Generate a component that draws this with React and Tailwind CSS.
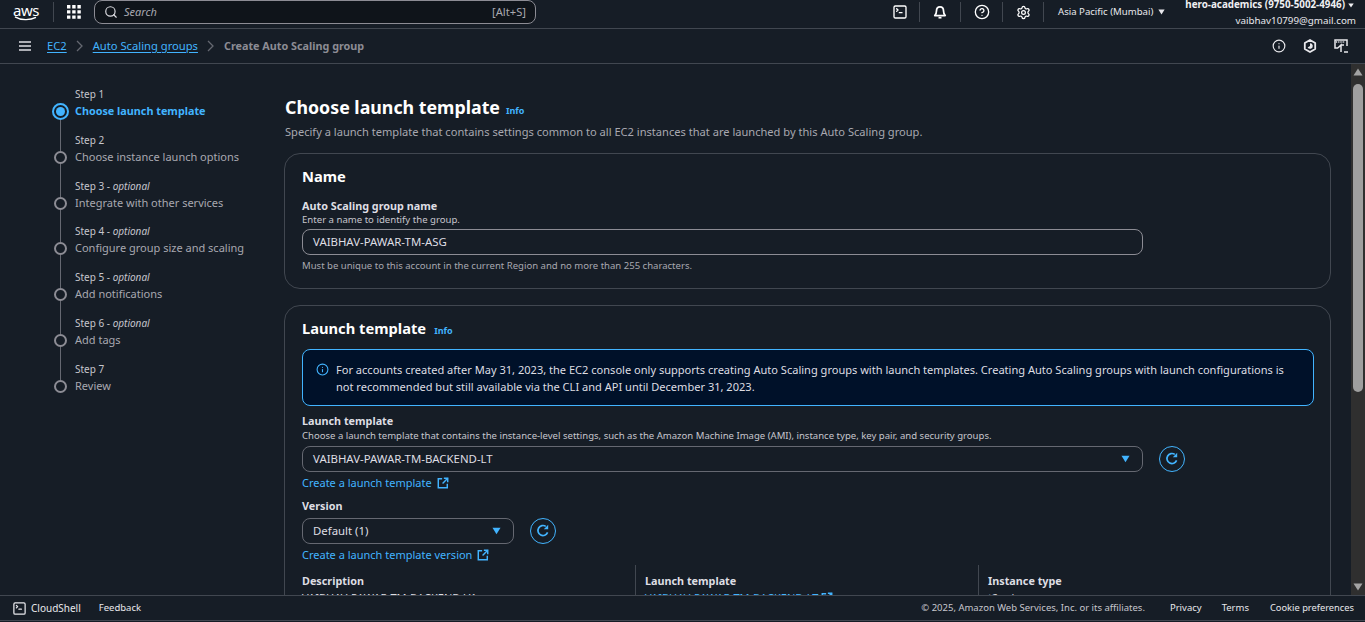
import React from "react";
import { Search, SquareTerminal, CircleHelp, Settings, Info } from "lucide-react";

const steps = [
  { label: "Step 1", title: "Choose launch template", active: true },
  { label: "Step 2", title: "Choose instance launch options" },
  { label: "Step 3", optional: true, title: "Integrate with other services" },
  { label: "Step 4", optional: true, title: "Configure group size and scaling" },
  { label: "Step 5", optional: true, title: "Add notifications" },
  { label: "Step 6", optional: true, title: "Add tags" },
  { label: "Step 7", title: "Review" },
];

function Caret({ className }) {
  return (
    <svg viewBox="0 0 10 8" className={className} fill="currentColor">
      <path d="M0.5 0.5h9L5 7.5z" />
    </svg>
  );
}

function Divider() {
  return <div className="w-px h-5 bg-[#414750] shrink-0" />;
}

function Chevron() {
  return (
    <svg viewBox="0 0 8 12" className="w-2 h-3 mx-[9px] text-[#656871]" fill="none" stroke="currentColor" strokeWidth="1.3">
      <path d="M1 1l5 5-5 5" />
    </svg>
  );
}

function ExtIcon({ className }) {
  return (
    <svg viewBox="0 0 14 14" className={className} fill="none" stroke="currentColor" strokeWidth="1.7">
      <path d="M6 2H1.5v10.5H12V8" />
      <path d="M8 1.5h4.5V6" />
      <path d="M12.5 1.5L6.5 7.5" />
    </svg>
  );
}

function Step({ step, first, last }) {
  return (
    <div className="flex gap-[7px] h-[45.83px]">
      <div className="w-4 flex flex-col items-center">
        <div className={`w-px h-[19px] ${first ? "" : "bg-[#656871]"}`} />
        {step.active ? (
          <div className="w-[17px] h-[17px] shrink-0 -mt-[2px] rounded-full border-2 border-[#42b4ff] flex items-center justify-center">
            <div className="w-[9px] h-[9px] rounded-full bg-[#42b4ff]" />
          </div>
        ) : (
          <div className="w-[13px] h-[13px] shrink-0 rounded-full border-2 border-[#8c8c94]" />
        )}
        <div className={`w-px flex-1 ${last ? "" : "bg-[#656871]"}`} />
      </div>
      <div>
        <div className="text-[10px] leading-4 text-[#c6c6cd]">
          {step.label}
          {step.optional && <span> - <i>optional</i></span>}
        </div>
        <div className={`leading-[18px] whitespace-nowrap ${step.active ? "text-[10.8px] font-bold text-[#42b4ff]" : "text-[11px] text-[#a8a8b0]"}`}>
          {step.title}
        </div>
      </div>
    </div>
  );
}

function RefreshButton() {
  return (
    <div className="w-[26px] h-[26px] rounded-full border border-[#42b4ff] text-[#42b4ff] flex items-center justify-center shrink-0">
      <svg viewBox="0 0 16 16" className="w-4 h-4" fill="none" stroke="currentColor" strokeWidth="1.7">
        <path d="M12.6 9.4A5 5 0 1 1 10.8 3.4" />
        <path d="M13.2 1.8v4.4H8.8z" fill="currentColor" stroke="none" />
      </svg>
    </div>
  );
}

function SelectBox({ value, className }) {
  return (
    <div className={`h-[26px] rounded-lg border border-[#656871] flex items-center justify-between pl-[10px] pr-[12px] text-[11.4px] text-[#dedee3] ${className}`}>
      <span>{value}</span>
      <Caret className="w-[9px] h-2 text-[#42b4ff]" />
    </div>
  );
}

function ExtLink({ children }) {
  return (
    <div className="flex items-center gap-[5px] text-[11px] leading-4 text-[#42b4ff]">
      <span>{children}</span>
      <ExtIcon className="w-3 h-3" />
    </div>
  );
}

function DetailCell({ title, value, link, border, className }) {
  return (
    <div className={`h-[60px] pt-2 shrink-0 ${border ? "border-l border-[#414750] pl-[9px]" : ""} ${className}`}>
      <div className="text-[10.8px] leading-4 font-bold text-[#dedee3]">{title}</div>
      <div className={`text-[11px] leading-4 mt-[1px] flex items-center gap-[3px] ${link ? "text-[#42b4ff] underline" : "text-[#dedee3]"}`}>
        {value}
        {link && <ExtIcon className="w-3 h-3" />}
      </div>
    </div>
  );
}

export default function App() {
  return (
    <div className="h-[622px] w-[1365px] overflow-hidden flex flex-col bg-[#161d26] text-[#dedee3] font-['Noto_Sans','Open_Sans',sans-serif]">
      {/* top nav */}
      <header className="h-[29px] shrink-0 border-b border-[#414750] flex items-center pl-[14px] pr-[9px] pb-1">
        <div className="w-6 flex flex-col items-center text-white">
          <span className="text-[15px] leading-[12px] tracking-[-0.5px]">aws</span>
          <svg viewBox="0 0 24 5" className="w-6 h-[5px]" fill="none" stroke="currentColor" strokeWidth="1.4">
            <path d="M1 0.8c6 3.6 15 3.6 21 0.6" />
          </svg>
        </div>
        <div className="w-px h-5 bg-[#414750] ml-[15px] mr-[13px]" />
        <svg viewBox="0 0 14 14" className="w-[14px] h-[14px] text-white" fill="currentColor">
          <path d="M0 0h3.4v3.4H0zM5.2 0h3.4v3.4H5.2zM10.4 0h3.4v3.4h-3.4zM0 5.2h3.4v3.4H0zM5.2 5.2h3.4v3.4H5.2zM10.4 5.2h3.4v3.4h-3.4zM0 10.4h3.4v3.4H0zM5.2 10.4h3.4v3.4H5.2zM10.4 10.4h3.4v3.4h-3.4z" />
        </svg>
        <div className="ml-[13px] w-[442px] h-[24px] rounded-lg border border-[#8c8c94] bg-[#0f141a] flex items-center pl-[9px] pr-[9px]">
          <Search size={14} strokeWidth={2} className="text-[#dedee3]" />
          <span className="ml-[6px] text-[11px] italic text-[#a8a8b0]">Search</span>
          <span className="ml-auto text-[11.2px] text-[#a8a8b0]">[Alt+S]</span>
        </div>
        <div className="ml-auto flex items-center">
          <SquareTerminal size={16} strokeWidth={2} className="text-white" />
          <div className="ml-[11px] mr-[13px]"><Divider /></div>
          <svg viewBox="0 0 16 16" className="w-[14px] h-[14px] text-white" fill="none" stroke="currentColor" strokeWidth="2">
            <path d="M2 12c1.5-1.5 2-2.5 2-5.5C4 3.5 5.5 2 8 2s4 1.5 4 4.5c0 3 .5 4 2 5.5z" strokeLinejoin="round" />
            <path d="M6.3 14.5h3.4" />
          </svg>
          <div className="mx-[13px]"><Divider /></div>
          <CircleHelp size={16} strokeWidth={2} className="text-white" />
          <div className="ml-[12px] mr-[13px]"><Divider /></div>
          <Settings size={15} strokeWidth={2} className="text-white" />
          <div className="ml-[12px]"><Divider /></div>
          <div className="ml-[14px] flex items-center gap-[5px] text-[9.6px] text-[#e8e8ec]">
            <span>Asia Pacific (Mumbai)</span>
            <Caret className="w-[7px] h-[6px]" />
          </div>
          <div className="ml-[20px] flex flex-col items-end mt-[2px]">
            <div className="flex items-center gap-[3px] mr-[2px] text-[9.8px] leading-3 font-bold text-[#f0f0f3] whitespace-nowrap">
              <span>hero-academics (9750-5002-4946)</span>
              <Caret className="w-[6px] h-[5px]" />
            </div>
            <div className="text-[9.8px] leading-3 mt-1 text-[#e8e8ec]">vaibhav10799@gmail.com</div>
          </div>
        </div>
      </header>

      {/* breadcrumbs */}
      <div className="h-[35px] shrink-0 border-b border-[#414750] flex items-center pl-[19px] pr-[17px]">
        <svg viewBox="0 0 12 10" className="w-3 h-[10px] text-[#dedee3]" stroke="currentColor" strokeWidth="1.6">
          <path d="M0 1h12M0 5h12M0 9h12" />
        </svg>
        <span className="ml-[16px] text-[11.2px] text-[#42b4ff] underline underline-offset-2">EC2</span>
        <Chevron />
        <span className="text-[11.2px] text-[#42b4ff] underline underline-offset-2">Auto Scaling groups</span>
        <Chevron />
        <span className="text-[10.8px] font-bold text-[#8c8c94]">Create Auto Scaling group</span>
        <div className="ml-auto flex items-center gap-[17px] text-[#e8e8ec]">
          <Info size={14} strokeWidth={2} />
          <svg viewBox="0 0 14 14" className="w-[14px] h-[14px]" fill="none" stroke="currentColor" strokeWidth="1.8">
            <path d="M7 1l5.2 3v6L7 13l-5.2-3V4z" strokeLinejoin="round" />
            <path d="M7 4.2a2.8 2.8 0 1 1-2.4 4.2L7 7z" fill="currentColor" stroke="none" />
          </svg>
          <svg viewBox="0 0 14 14" className="w-[14px] h-[14px]" fill="none" stroke="currentColor" strokeWidth="1.5">
            <path d="M4 9H1V1h12v6" />
            <path d="M2 3h9" strokeDasharray="1.2 1" />
            <path d="M7 13V6L3.8 9M7 6h3" />
            <path d="M10 13h4" />
          </svg>
        </div>
      </div>

      {/* page body */}
      <div className="flex-1 min-h-0 flex">
        <aside className="w-[284px] shrink-0 pl-[52px] pt-[22px]">
          {steps.map((s, i) => (
            <Step key={s.label} step={s} first={i === 0} last={i === steps.length - 1} />
          ))}
        </aside>

        <main className="flex-1 min-w-0 overflow-hidden pr-[20px] pt-[30px]">
          <div className="flex items-baseline gap-[6px] pl-px">
            <h1 className="text-[17.8px] leading-[26px] font-bold text-white">Choose launch template</h1>
            <span className="text-[9px] font-bold text-[#42b4ff]">Info</span>
          </div>
          <p className="text-[11.1px] leading-4 mt-[4px] pl-px text-[#a8a8b0]">
            Specify a launch template that contains settings common to all EC2 instances that are launched by this Auto Scaling group.
          </p>

          <section className="mt-[13px] h-[136px] rounded-2xl border border-[#414750] pl-[17px] pr-[16px] pt-[12px]">
            <h2 className="text-[14.7px] leading-5 font-bold text-white">Name</h2>
            <div className="text-[10.8px] leading-4 mt-[12px] font-bold text-[#dedee3]">Auto Scaling group name</div>
            <div className="text-[9.6px] leading-3 text-[#c6c6cd]">Enter a name to identify the group.</div>
            <div className="w-[841px] h-[26px] mt-[3px] rounded-lg border border-[#8c8c94] flex items-center pl-[10px] text-[11.4px] text-[#dedee3]">
              VAIBHAV-PAWAR-TM-ASG
            </div>
            <div className="text-[9.55px] leading-3 mt-[5px] text-[#a8a8b0]">
              Must be unique to this account in the current Region and no more than 255 characters.
            </div>
          </section>

          <section className="mt-[16px] rounded-t-2xl border border-[#414750] pl-[17px] pr-[16px] pt-[12px] pb-4">
            <div className="flex items-baseline gap-[8px]">
              <h2 className="text-[14.7px] leading-5 font-bold text-white">Launch template</h2>
              <span className="text-[9px] font-bold text-[#42b4ff]">Info</span>
            </div>

            <div className="mt-[11px] h-[57px] rounded-lg border border-[#42b4ff] bg-[#001129] flex pl-[13px] pr-[20px] pt-[11px]">
              <Info size={13} strokeWidth={2} className="text-[#42b4ff] mt-[2px] shrink-0" />
              <p className="ml-[7px] text-[11.05px] leading-[17px] text-[#dedee3]">
                For accounts created after May 31, 2023, the EC2 console only supports creating Auto Scaling groups with launch templates. Creating Auto Scaling groups with launch configurations is not recommended but still available via the CLI and API until December 31, 2023.
              </p>
            </div>

            <div className="text-[10.8px] leading-4 mt-[7px] font-bold text-[#dedee3]">Launch template</div>
            <div className="text-[9.55px] leading-3 mt-[1px] text-[#c6c6cd]">
              Choose a launch template that contains the instance-level settings, such as the Amazon Machine Image (AMI), instance type, key pair, and security groups.
            </div>
            <div className="flex items-center gap-[16px] mt-[4px]">
              <SelectBox value="VAIBHAV-PAWAR-TM-BACKEND-LT" className="w-[841px]" />
              <RefreshButton />
            </div>
            <div className="mt-[3px]"><ExtLink>Create a launch template</ExtLink></div>

            <div className="text-[10.8px] leading-4 mt-[7px] font-bold text-[#dedee3]">Version</div>
            <div className="flex items-center gap-[16px] mt-[4px]">
              <SelectBox value="Default (1)" className="w-[212px]" />
              <RefreshButton />
            </div>
            <div className="mt-[3px]"><ExtLink>Create a launch template version</ExtLink></div>

            <div className="flex mt-[2px]">
              <DetailCell title="Description" value="VAIBHAV-PAWAR-TM-BACKEND-V1" className="w-[333px]" />
              <DetailCell title="Launch template" value="VAIBHAV-PAWAR-TM-BACKEND-LT" link border className="w-[343px]" />
              <DetailCell title="Instance type" value="t2.micro" border className="w-[343px]" />
            </div>
          </section>
        </main>

        {/* scrollbar */}
        <div className="w-[14px] shrink-0 bg-[#2f2f2f] flex flex-col items-center pt-1 pb-1">
          <svg viewBox="0 0 10 8" className="w-[10px] h-2 text-[#a3a3a3]" fill="currentColor"><path d="M5 0.5l4.5 7h-9z" /></svg>
          <div className="w-[10px] h-[308px] mt-2 rounded-full bg-[#9f9f9f]" />
          <svg viewBox="0 0 10 8" className="w-[10px] h-2 mt-auto text-[#a3a3a3]" fill="currentColor"><path d="M0.5 0.5h9L5 7.5z" /></svg>
        </div>
      </div>

      {/* footer */}
      <footer className="h-[26px] shrink-0 border-t border-b border-[#414750] flex items-center pl-[12px] pr-[11px] text-[9.5px] text-[#e8e8ec]">
        <SquareTerminal size={15} strokeWidth={2} />
        <span className="ml-[4px] text-[10px]">CloudShell</span>
        <span className="ml-[18px]">Feedback</span>
        <span className="ml-auto text-[#c6c6cd]">© 2025, Amazon Web Services, Inc. or its affiliates.</span>
        <span className="ml-[25px]">Privacy</span>
        <span className="ml-[20px]">Terms</span>
        <span className="ml-[21px] text-[9.3px]">Cookie preferences</span>
      </footer>
      <div className="h-px shrink-0" />
    </div>
  );
}
